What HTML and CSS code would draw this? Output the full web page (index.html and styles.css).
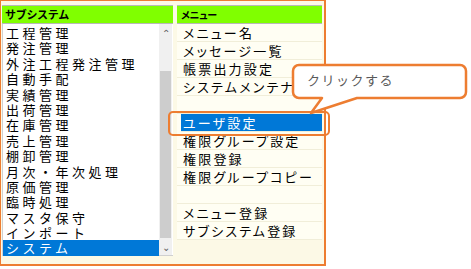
FILE: index.html
```html
<!DOCTYPE html>
<html lang="ja">
<head>
    <meta charset="UTF-8">
    <title>メニュー設定</title>
    <link rel="stylesheet" href="styles.css">
</head>
<body>
    <div class="frame">
        <div class="panel sub-panel">
            <div class="head">サブシステム</div>
            <div class="listbox">
                <ul class="sub-list">
                    <li>工程管理</li>
                    <li>発注管理</li>
                    <li>外注工程発注管理</li>
                    <li>自動手配</li>
                    <li>実績管理</li>
                    <li>出荷管理</li>
                    <li>在庫管理</li>
                    <li>売上管理</li>
                    <li>棚卸管理</li>
                    <li>月次・年次処理</li>
                    <li>原価管理</li>
                    <li>臨時処理</li>
                    <li>マスタ保守</li>
                    <li>インポート</li>
                    <li class="selected">システム</li>
                </ul>
                <div class="scrollbar">
                    <div class="arrow">&#8963;</div>
                    <div class="track"><div class="thumb"></div></div>
                    <div class="arrow">&#8964;</div>
                </div>
            </div>
        </div>

        <div class="panel menu-panel">
            <div class="head">メニュー</div>
            <ul class="menu-list">
                <li>メニュー名</li>
                <li>メッセージ一覧</li>
                <li>帳票出力設定</li>
                <li>システムメンテナンス</li>
                <li></li>
                <li class="selected">ユーザ設定</li>
                <li>権限グループ設定</li>
                <li>権限登録</li>
                <li>権限グループコピー</li>
                <li></li>
                <li>メニュー登録</li>
                <li>サブシステム登録</li>
            </ul>
        </div>
    </div>

    <!-- annotation over the screenshot -->
    <div class="highlight"></div>
    <div class="callout">
        <svg width="180" height="54" viewBox="0 0 180 54">
            <path d="M9,3 H170 A6,6 0 0 1 176,9 V30 A6,6 0 0 1 170,36 H67 L21,51 L32,36 H9 A6,6 0 0 1 3,30 V9 A6,6 0 0 1 9,3 Z"
                  fill="#ffffff" stroke="#ed7d31" stroke-width="2.5" stroke-linejoin="round"/>
        </svg>
        <span class="callout-text">クリックする</span>
    </div>
</body>
</html>
```

FILE: styles.css
```css
* {
    margin: 0;
    padding: 0;
    box-sizing: border-box;
}

body {
    background-color: #ffffff;
    color: #000000;
    font-family: "Noto Sans CJK JP", "Noto Sans", sans-serif;
    position: relative;
    width: 471px;
    height: 269px;
    overflow: hidden;
}

.frame {
    width: 326px;
    height: 266px;
    border: 2px solid #ed7d31;
    border-top-width: 1px;
    border-left-width: 1px;
    background-color: #fcf9e6;
    display: flex;
    gap: 4px;
    padding: 4px 2px 0 1px;
}

.panel {
    display: flex;
    flex-direction: column;
}

.sub-panel {
    width: 171px;
}

.menu-panel {
    width: 145px;
}

.head {
    height: 19px;
    background-color: #80ff00;
    border-top: 1px solid #b8b8b8;
    border-bottom: 1px solid #b8b8b8;
    font-size: 11px;
    font-weight: bold;
    line-height: 17px;
    padding-left: 3px;
    letter-spacing: -0.3px;
}

.menu-panel .head {
    padding-left: 4px;
    font-size: 10px;
    font-feature-settings: "palt";
}

.listbox {
    height: 232px;
    background-color: #ffffff;
    border-left: 1px solid #d0d0d0;
    border-bottom: 1px solid #d0d0d0;
    display: flex;
}

.sub-list {
    list-style: none;
    flex: 1;
    padding-top: 1px;
}

.sub-list li {
    height: 15.4px;
    font-size: 13px;
    line-height: 15.4px;
    letter-spacing: 3.5px;
    padding-left: 3px;
    white-space: nowrap;
}

.sub-list li.selected {
    background-color: #0078d7;
    color: #ffffff;
}

.scrollbar {
    width: 13px;
    margin-right: 1px;
    background-color: #f0f0f0;
    display: flex;
    flex-direction: column;
}

.arrow {
    height: 17px;
    font-size: 10px;
    line-height: 17px;
    text-align: center;
    color: #606060;
}

.track {
    flex: 1;
    display: flex;
    flex-direction: column;
    padding-top: 30px;
}

.thumb {
    flex: 1;
    background-color: #cdcdcd;
    margin: 0 1px;
}

.menu-list {
    list-style: none;
    background-color: #fffef3;
}

.menu-list li {
    height: 18px;
    font-size: 13px;
    line-height: 18px;
    letter-spacing: 2.2px;
    font-feature-settings: "palt";
    padding-left: 6px;
    border-bottom: 1px solid #f1eed9;
    white-space: nowrap;
    overflow: hidden;
}

.menu-list li.selected {
    background-color: #0078d7;
    color: #ffffff;
    margin-left: 4px;
    padding-left: 2px;
}

.highlight {
    position: absolute;
    left: 168px;
    top: 111px;
    width: 162px;
    height: 25px;
    border: 2.5px solid #ed7d31;
    border-radius: 5px;
}

.callout {
    position: absolute;
    left: 290px;
    top: 62px;
    width: 180px;
    height: 54px;
}

.callout svg {
    display: block;
}

.callout-text {
    position: absolute;
    left: 17px;
    top: 10px;
    font-size: 13px;
    line-height: 16px;
    color: #595959;
    letter-spacing: 1.5px;
    white-space: nowrap;
}
```
